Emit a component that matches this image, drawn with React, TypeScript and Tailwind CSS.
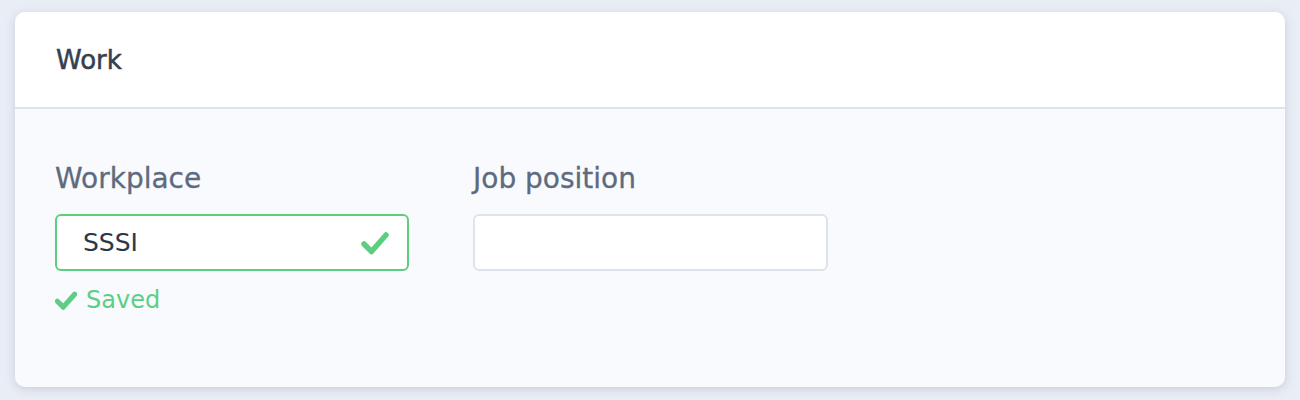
function Check({ className, width = 5 }: { className?: string; width?: number }) {
  return (
    <svg viewBox="0 0 28 24" className={className} fill="none">
      <polyline
        points="3,13 10.5,20.5 25,4"
        stroke="currentColor"
        strokeWidth={width}
        strokeLinecap="round"
        strokeLinejoin="round"
      />
    </svg>
  );
}

export default function App() {
  return (
    <div
      className="w-full h-[400px] bg-[#e9edf5] pt-3 px-[15px]"
      style={{ fontFamily: "'DejaVu Sans', 'Open Sans', sans-serif" }}
    >
      <div className="w-full h-[375px] rounded-[10px] bg-[#f8fafd] overflow-hidden shadow-[0_2px_10px_rgba(100,116,145,0.25)]">
        <div className="h-[97px] bg-white border-b-2 border-[#dbe2ec] px-[41px] flex items-center">
          <h2 className="text-[26px] text-[#353f50] [-webkit-text-stroke:0.5px_#353f50] pt-[2px]">Work</h2>
        </div>
        <div className="px-[40px] pt-[53px] flex gap-[64px]">
          <div className="w-[354px] flex flex-col">
            <label className="text-[28px] text-[#5e6a7d] [-webkit-text-stroke:0.3px_#5e6a7d] leading-[34px]">Workplace</label>
            <div className="mt-[18px] h-[57px] rounded-[6px] border-2 border-[#5ccf7e] bg-white flex items-center pl-[26px] pr-[18px]">
              <span className="flex-1 text-[25px] text-[#2d3748]">SSSI</span>
              <Check className="w-[28px] h-[24px] text-[#5ccf7e]" width={5.5} />
            </div>
            <div className="mt-[15px] flex items-center gap-[9px] text-[#5ccf85]">
              <Check className="w-[22px] h-[19px]" width={6.5} />
              <span className="text-[24px] leading-[28px]">Saved</span>
            </div>
          </div>
          <div className="w-[355px] flex flex-col">
            <label className="text-[28px] text-[#5e6a7d] [-webkit-text-stroke:0.3px_#5e6a7d] leading-[34px]">Job position</label>
            <div className="mt-[18px] h-[57px] rounded-[6px] border-2 border-[#dde3ec] bg-white" />
          </div>
        </div>
      </div>
    </div>
  );
}
